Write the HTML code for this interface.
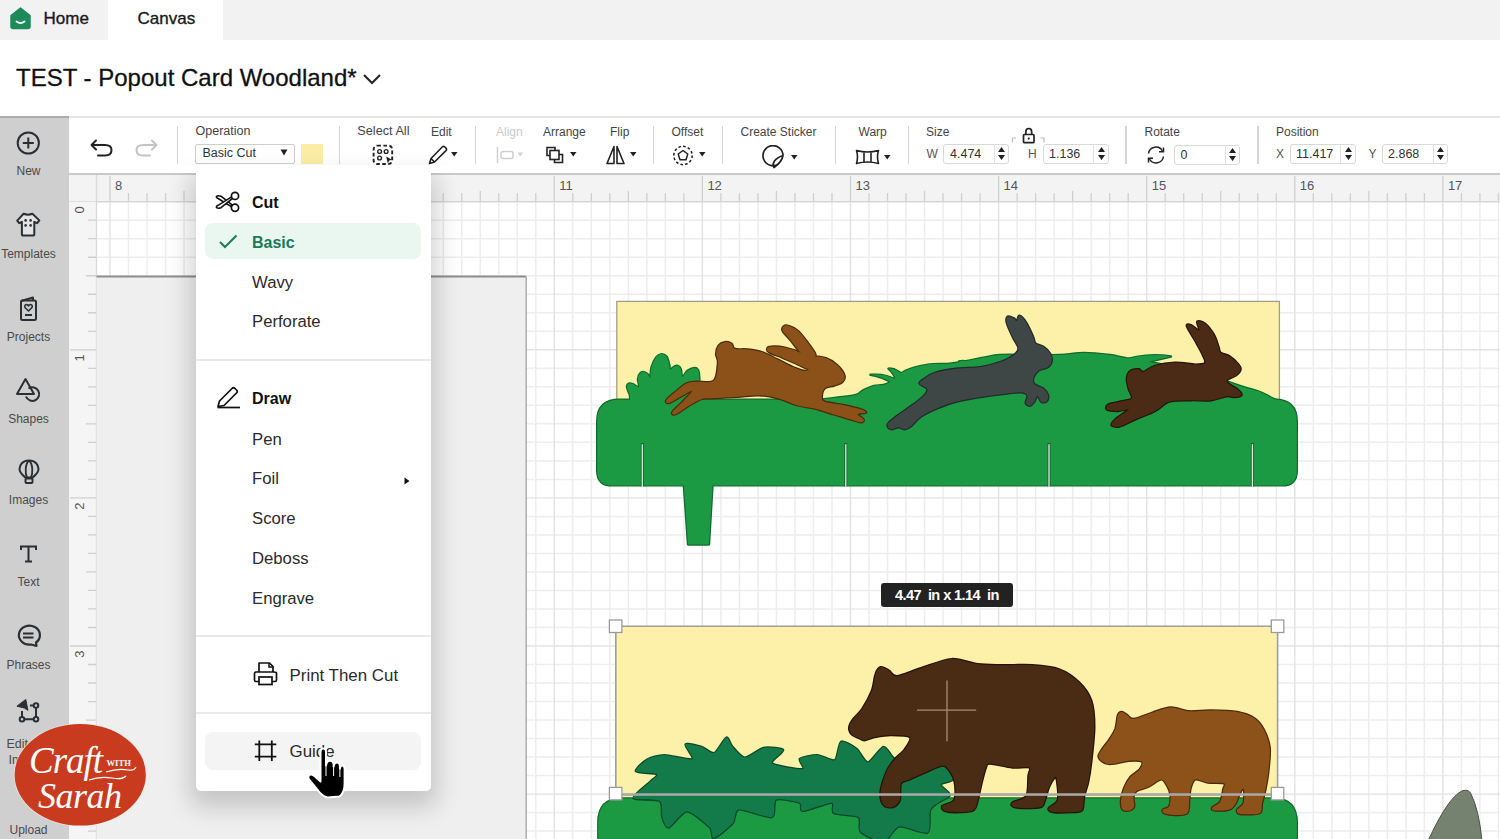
<!DOCTYPE html>
<html><head><meta charset="utf-8">
<style>
*{box-sizing:border-box;margin:0;padding:0}
html,body{width:1500px;height:839px;overflow:hidden;background:#fff;font-family:"Liberation Sans",sans-serif;color:#222}
.abs{position:absolute}
#topbar{position:absolute;left:0;top:0;width:1500px;height:40px;background:#f2f2f2}
#tab-canvas{position:absolute;left:108px;top:0;width:115px;height:40px;background:#fff}
.tabtxt{position:absolute;font-size:16px;color:#1a1a1a;white-space:nowrap;-webkit-text-stroke:0.35px #1a1a1a}
#title{position:absolute;left:16px;top:64px;font-size:23.5px;color:#111;white-space:nowrap;-webkit-text-stroke:0.3px #111}
#sidebar{position:absolute;left:0;top:116px;width:69px;height:723px;background:#cfcfcf;border-top:2px solid #ababab}
.sblabel{position:absolute;width:69px;left:0;text-align:center;font-size:12px;color:#4a4a4a;white-space:nowrap}
.sbicon{position:absolute;left:0;width:56px}
#toolbar{position:absolute;left:69px;top:116px;width:1431px;height:59px;background:#fff;border-top:2px solid #e6e6e6;border-bottom:2px solid #c9c9c9}
.tl{position:absolute;font-size:12px;color:#444;white-space:nowrap;top:7px}
.sep{position:absolute;top:8px;width:1.5px;height:38px;background:#d6d6d6}
.inp{position:absolute;top:26px;height:20px;border:1px solid #d9d9d9;border-radius:3px;background:#fff;font-size:13px;color:#333}
.menu-item{position:absolute;left:252px;font-size:16px;color:#2b2b2b;white-space:nowrap}
</style></head><body>
<div id="topbar"></div>
<div id="tab-canvas"></div>
<svg class="abs" style="left:9px;top:7px" width="23" height="23" viewBox="0 0 23 23">
<path d="M11.5 1 L21 8.5 L21 19.5 Q21 21.5 19 21.5 L4 21.5 Q2 21.5 2 19.5 L2 8.5 Z" fill="#1c8a5b" stroke="#1c8a5b" stroke-width="1.5" stroke-linejoin="round"/>
<path d="M7.5 14.5 Q11.5 17.5 15.5 14.5" fill="none" stroke="#fff" stroke-width="1.8" stroke-linecap="round"/>
</svg>
<div class="tabtxt" style="left:43.5px;top:10px;line-height:1;font-size:17px">Home</div>
<div class="tabtxt" style="left:137.5px;top:10px;line-height:1;font-size:17px">Canvas</div>
<div id="title" style="line-height:1;top:66.4px;font-size:24px">TEST - Popout Card Woodland*</div>
<svg class="abs" style="left:362px;top:72px" width="20" height="14" viewBox="0 0 20 14"><path d="M2 3 L10 11 L18 3" fill="none" stroke="#222" stroke-width="2"/></svg>

<div id="sidebar"></div>
<!-- New -->
<svg class="abs" style="left:16px;top:131px" width="25" height="25" viewBox="0 0 25 25"><circle cx="12.3" cy="12" r="10.6" fill="none" stroke="#2a2f33" stroke-width="2"/><path d="M12.3 6.5V17.5M6.8 12H17.8" stroke="#2a2f33" stroke-width="2"/></svg>
<div class="sblabel" style="top:165px;line-height:1;left:-6px">New</div>
<!-- Templates -->
<svg class="abs" style="left:16px;top:212px" width="25" height="26" viewBox="0 0 25 26"><path d="M7.6 1.8 Q12 3.6 16.4 1.8 L23.3 8.4 L21.2 11.2 L18.3 9.8 L18.3 22 Q18.3 23.6 16.7 23.6 L7.5 23.6 Q5.9 23.6 5.9 22 L5.9 9.8 L3.2 11.2 L1.2 8.6 Z" fill="#e4e4e4" stroke="#2a2f33" stroke-width="2" stroke-linejoin="round"/><circle cx="9.6" cy="8.4" r="1.3" fill="#2a2f33"/><circle cx="14.6" cy="8.4" r="1.3" fill="#2a2f33"/><circle cx="9.6" cy="13.4" r="1.3" fill="#2a2f33"/><circle cx="14.6" cy="13.4" r="1.3" fill="#2a2f33"/></svg>
<div class="sblabel" style="top:247.5px;line-height:1;left:-6px">Templates</div>
<!-- Projects -->
<svg class="abs" style="left:18px;top:296px" width="22" height="26" viewBox="0 0 22 26"><path d="M3 5 L15 1.5 L15 4" fill="none" stroke="#2a2f33" stroke-width="2" stroke-linejoin="round"/><rect x="3" y="4.5" width="15" height="19.5" rx="1.5" fill="none" stroke="#2a2f33" stroke-width="2"/><path d="M10.5 15 L7 11.5 Q6 9 8.5 8.5 Q10 8.5 10.5 10 Q11 8.5 12.5 8.5 Q15 9 14 11.5 Z" fill="none" stroke="#2a2f33" stroke-width="1.6" stroke-linejoin="round"/><path d="M7 19H14" stroke="#2a2f33" stroke-width="2"/></svg>
<div class="sblabel" style="top:330.5px;line-height:1;left:-6px">Projects</div>
<!-- Shapes -->
<svg class="abs" style="left:15px;top:377px" width="27" height="26" viewBox="0 0 27 26"><path d="M10.5 2 L2 17 L19 17 Z" fill="none" stroke="#2a2f33" stroke-width="2" stroke-linejoin="round"/><path d="M13.5 11.5 A6.8 6.8 0 1 1 11 19.5" fill="none" stroke="#2a2f33" stroke-width="2"/></svg>
<div class="sblabel" style="top:412.5px;line-height:1;left:-6px">Shapes</div>
<!-- Images -->
<svg class="abs" style="left:18px;top:459px" width="22" height="26" viewBox="0 0 22 26"><path d="M11 1.5 C4.5 1.5 1.5 6 1.5 10 C1.5 14 5 16.5 7.5 18.5 L14.5 18.5 C17 16.5 20.5 14 20.5 10 C20.5 6 17.5 1.5 11 1.5 Z" fill="none" stroke="#2a2f33" stroke-width="2"/><path d="M11 1.5 C7 5 7 14 9 18.5 M11 1.5 C15 5 15 14 13 18.5" fill="none" stroke="#2a2f33" stroke-width="1.8"/><rect x="7.5" y="19.5" width="7" height="4.5" rx="1" fill="none" stroke="#2a2f33" stroke-width="2"/></svg>
<div class="sblabel" style="top:494px;line-height:1;left:-6px">Images</div>
<!-- Text -->
<svg class="abs" style="left:19px;top:544px" width="19" height="20" viewBox="0 0 19 20"><path d="M2 6 L2 2.5 L17 2.5 L17 6 M9.5 2.5 L9.5 17.5 M6 17.5 L13 17.5" fill="none" stroke="#2a2f33" stroke-width="2"/></svg>
<div class="sblabel" style="top:576px;line-height:1;left:-6px">Text</div>
<!-- Phrases -->
<svg class="abs" style="left:15px;top:623px" width="27" height="26" viewBox="0 0 27 26"><path d="M21 19.5 A10.5 9.5 0 1 0 16 21.5 L21.5 23 Z" fill="none" stroke="#2a2f33" stroke-width="2.2" stroke-linejoin="round"/><path d="M8 10.5H18.5M8 14.5H18.5" stroke="#2a2f33" stroke-width="2"/></svg>
<div class="sblabel" style="top:659px;line-height:1;left:-6px">Phrases</div>
<!-- Edit Image -->
<svg class="abs" style="left:15px;top:698px" width="27" height="26" viewBox="0 0 27 26"><path d="M7 13 V21.3 H21 V7.5 H15" fill="none" stroke="#2a2f33" stroke-width="2"/><circle cx="7" cy="21.3" r="2.3" fill="#cfcfcf" stroke="#2a2f33" stroke-width="2"/><circle cx="21" cy="21.3" r="2.3" fill="#cfcfcf" stroke="#2a2f33" stroke-width="2"/><circle cx="21" cy="7.5" r="2.3" fill="#cfcfcf" stroke="#2a2f33" stroke-width="2"/><path d="M1.9 8.2 L10.8 1.4 L12.9 12.3 L9.3 10 Z" fill="#2a2f33" stroke="#2a2f33" stroke-width="1" stroke-linejoin="round"/></svg>
<div class="abs" style="top:737.5px;line-height:1;left:6.5px;font-size:12.5px;color:#4a4a4a">Edit</div>
<div class="abs" style="top:754px;line-height:1;left:8.5px;font-size:12.5px;color:#4a4a4a">Image</div>
<div class="sblabel" style="top:824px;line-height:1;left:-6px">Upload</div>
<div id="toolbar"></div>
<!-- undo/redo -->
<svg class="abs" style="left:88px;top:137px" width="28" height="22" viewBox="0 0 28 22"><path d="M8 3.5 L3.5 8 L8 12.5 M3.5 8 L17 8 Q23.5 8 23.5 13 Q23.5 18.5 17 18.5 L10 18.5" fill="none" stroke="#222" stroke-width="2" stroke-linejoin="round" stroke-linecap="round"/></svg>
<svg class="abs" style="left:132px;top:137px" width="28" height="22" viewBox="0 0 28 22" style="transform:scaleX(-1)"><g transform="translate(28,0) scale(-1,1)"><path d="M8 3.5 L3.5 8 L8 12.5 M3.5 8 L17 8 Q23.5 8 23.5 13 Q23.5 18.5 17 18.5 L10 18.5" fill="none" stroke="#c4c4c4" stroke-width="2" stroke-linejoin="round" stroke-linecap="round"/></g></svg>
<div class="sep" style="left:176.5px;top:126px"></div>
<div class="tl" style="left:195.5px;top:125.4px;line-height:1;font-size:12.5px">Operation</div>
<div class="abs" style="left:195px;top:143.5px;width:99.5px;height:20.5px;border:1px solid #cfcfcf;border-radius:2px;background:#fff"></div>
<div class="abs" style="left:202.5px;top:147px;font-size:12.5px;line-height:1;color:#333;white-space:nowrap">Basic Cut</div>
<svg class="abs" style="left:280px;top:149px" width="8" height="7" viewBox="0 0 8 7"><path d="M0.5 0.5 L7.5 0.5 L4 6.5 Z" fill="#222"/></svg>
<div class="abs" style="left:300.5px;top:143.5px;width:22px;height:20px;background:#fbeda6;border-radius:1px"></div>
<div class="sep" style="left:338.5px;top:126px"></div>
<div class="tl" style="left:357.3px;top:125.2px;line-height:1;font-size:12.7px">Select All</div>
<svg class="abs" style="left:372px;top:144px" width="22" height="22" viewBox="0 0 22 22"><rect x="1.6" y="1.6" width="18.6" height="18.4" rx="3.8" fill="none" stroke="#222" stroke-width="1.9" stroke-dasharray="3.6 2.4"/><circle cx="7.6" cy="7.5" r="1.9" fill="none" stroke="#222" stroke-width="1.4"/><circle cx="14.1" cy="7.5" r="1.9" fill="none" stroke="#222" stroke-width="1.4"/><circle cx="7.6" cy="14" r="1.9" fill="none" stroke="#222" stroke-width="1.4"/><path d="M14.2 12.6 L20 15.8 L17.2 16.6 L15.8 19.6 Z" fill="#222"/></svg>
<div class="tl" style="left:431px;top:125.5px;line-height:1">Edit</div>
<svg class="abs" style="left:427px;top:144px" width="22" height="22" viewBox="0 0 22 22"><path d="M2.5 19.5 L4 14.5 L15.5 2.8 Q16.5 1.8 17.6 2.8 L19.2 4.4 Q20.2 5.4 19.2 6.4 L7.5 18 Z M4 14.5 L7.5 18" fill="none" stroke="#222" stroke-width="1.6" stroke-linejoin="round"/></svg>
<svg class="abs" style="left:451px;top:152px" width="7" height="5" viewBox="0 0 7 5"><path d="M0 0 L6.5 0 L3.25 4.5 Z" fill="#222"/></svg>
<div class="sep" style="left:474.5px;top:126px"></div>
<div class="tl" style="left:496px;top:125.5px;line-height:1;color:#c9c9c9">Align</div>
<svg class="abs" style="left:495px;top:146px" width="30" height="18" viewBox="0 0 30 18"><path d="M2.5 1 V17" stroke="#cfcfcf" stroke-width="1.5"/><rect x="6" y="5.5" width="12" height="7" rx="2" fill="none" stroke="#cfcfcf" stroke-width="1.5"/><path d="M22.5 6.5 L28 6.5 L25.25 10.5 Z" fill="#d0d0d0"/></svg>
<div class="tl" style="left:543px;top:125.5px;line-height:1">Arrange</div>
<svg class="abs" style="left:544px;top:145px" width="22" height="20" viewBox="0 0 22 20"><path d="M11 5 L11 2.5 L3 2.5 L3 10.5 L6 10.5" fill="none" stroke="#222" stroke-width="1.6"/><rect x="6" y="5.5" width="9" height="9" fill="none" stroke="#222" stroke-width="1.6"/><path d="M15 9.5 L18.5 9.5 L18.5 17.5 L10.5 17.5 L10.5 14.5" fill="none" stroke="#222" stroke-width="1.6"/></svg>
<svg class="abs" style="left:569.5px;top:152px" width="7" height="5" viewBox="0 0 7 5"><path d="M0 0 L6.5 0 L3.25 4.5 Z" fill="#222"/></svg>
<div class="tl" style="left:610px;top:125.5px;line-height:1">Flip</div>
<svg class="abs" style="left:605px;top:145px" width="21" height="20" viewBox="0 0 21 20"><path d="M9 1.5 L2 18.5 L9 18.5 Z M12 1.5 L19 18.5 L12 18.5 Z" fill="none" stroke="#222" stroke-width="1.6" stroke-linejoin="round"/></svg>
<svg class="abs" style="left:629.5px;top:152px" width="7" height="5" viewBox="0 0 7 5"><path d="M0 0 L6.5 0 L3.25 4.5 Z" fill="#222"/></svg>
<div class="sep" style="left:652.5px;top:126px"></div>
<div class="tl" style="left:671.5px;top:125.5px;line-height:1">Offset</div>
<svg class="abs" style="left:672px;top:145px" width="22" height="21" viewBox="0 0 22 21"><circle cx="11" cy="10.5" r="9.2" fill="none" stroke="#222" stroke-width="1.6" stroke-dasharray="2.6 2.2"/><path d="M11 5.5 L15.8 9 L14 14.8 L8 14.8 L6.2 9 Z" fill="none" stroke="#222" stroke-width="1.5" stroke-linejoin="round"/></svg>
<svg class="abs" style="left:699px;top:152px" width="7" height="5" viewBox="0 0 7 5"><path d="M0 0 L6.5 0 L3.25 4.5 Z" fill="#222"/></svg>
<div class="sep" style="left:721.5px;top:126px"></div>
<div class="tl" style="left:740.5px;top:125.5px;line-height:1">Create Sticker</div>
<svg class="abs" style="left:761px;top:145px" width="26" height="25" viewBox="0 0 26 25"><path d="M17.5 19 A10 10 0 1 1 22 10.5 Q21 17 13 22.5 Q11 20 13.5 16 Q16 12.5 22 10.5" fill="none" stroke="#222" stroke-width="1.7" stroke-linejoin="round"/></svg>
<svg class="abs" style="left:790.5px;top:155px" width="7" height="5" viewBox="0 0 7 5"><path d="M0 0 L6.5 0 L3.25 4.5 Z" fill="#222"/></svg>
<div class="sep" style="left:834.5px;top:126px"></div>
<div class="tl" style="left:858.5px;top:125.5px;line-height:1">Warp</div>
<svg class="abs" style="left:855px;top:149px" width="26" height="17" viewBox="0 0 26 17"><path d="M1.5 1.5 Q12.5 4.5 23.5 1.5 Q21.5 8 23.5 14.5 Q12.5 11.5 1.5 14.5 Q3.5 8 1.5 1.5 Z M9 3 V13 M16 3 V13" fill="none" stroke="#222" stroke-width="1.6" stroke-linejoin="round"/></svg>
<svg class="abs" style="left:884px;top:155px" width="7" height="5" viewBox="0 0 7 5"><path d="M0 0 L6.5 0 L3.25 4.5 Z" fill="#222"/></svg>
<div class="sep" style="left:907.5px;top:126px"></div>
<div class="tl" style="left:926px;top:125.5px;line-height:1">Size</div>
<div class="tl" style="left:926.5px;top:147.5px;line-height:1;color:#555">W</div>
<div class="inp" style="left:943px;top:143.5px;width:65.5px;height:20.5px"></div>
<div class="abs" style="left:993.5px;top:144px;width:1px;height:19.5px;background:#e0e0e0"></div>
<div class="abs" style="left:950px;top:148px;font-size:12.5px;line-height:1;color:#333">4.474</div>
<svg class="abs" style="left:997px;top:146px" width="9" height="15" viewBox="0 0 9 15"><path d="M4.5 1 L8 6 L1 6 Z M1 9 L8 9 L4.5 14 Z" fill="#222"/></svg>
<svg class="abs" style="left:1011px;top:127px" width="35" height="17" viewBox="0 0 35 17"><path d="M1.5 15.5 V11 H5 M29.5 11 H33 V15.5" fill="none" stroke="#bdbdbd" stroke-width="1.2"/><rect x="12.5" y="7.5" width="10.5" height="8.2" rx="1" fill="none" stroke="#222" stroke-width="1.7"/><path d="M14.8 7.5 V5 Q14.8 1.5 17.75 1.5 Q20.7 1.5 20.7 5 V7.5" fill="none" stroke="#222" stroke-width="1.7"/><circle cx="17.75" cy="11.6" r="1.1" fill="#222"/></svg>
<div class="tl" style="left:1028px;top:147.5px;line-height:1;color:#555">H</div>
<div class="inp" style="left:1042.5px;top:143.5px;width:66px;height:20.5px"></div>
<div class="abs" style="left:1093px;top:144px;width:1px;height:19.5px;background:#e0e0e0"></div>
<div class="abs" style="left:1049px;top:148px;font-size:12.5px;line-height:1;color:#333">1.136</div>
<svg class="abs" style="left:1096.5px;top:146px" width="9" height="15" viewBox="0 0 9 15"><path d="M4.5 1 L8 6 L1 6 Z M1 9 L8 9 L4.5 14 Z" fill="#222"/></svg>
<div class="sep" style="left:1125px;top:126px"></div>
<div class="tl" style="left:1144.5px;top:125.5px;line-height:1">Rotate</div>
<svg class="abs" style="left:1145px;top:145px" width="22" height="20" viewBox="0 0 22 20"><path d="M3.5 8.5 A7.5 7.5 0 0 1 17.5 6 M18.5 11.5 A7.5 7.5 0 0 1 4.5 14" fill="none" stroke="#222" stroke-width="1.5"/><path d="M18.5 2.5 V6.8 H14 M3.5 17.5 V13.2 H8" fill="none" stroke="#222" stroke-width="1.5"/></svg>
<div class="inp" style="left:1173.5px;top:144.5px;width:66.5px;height:20.5px"></div>
<div class="abs" style="left:1224.5px;top:145px;width:1px;height:19.5px;background:#e0e0e0"></div>
<div class="abs" style="left:1180.5px;top:148.5px;font-size:12.5px;line-height:1;color:#333">0</div>
<svg class="abs" style="left:1228px;top:147px" width="9" height="15" viewBox="0 0 9 15"><path d="M4.5 1 L8 6 L1 6 Z M1 9 L8 9 L4.5 14 Z" fill="#222"/></svg>
<div class="sep" style="left:1257px;top:126px"></div>
<div class="tl" style="left:1276px;top:125.5px;line-height:1">Position</div>
<div class="tl" style="left:1276px;top:147.5px;line-height:1;color:#555">X</div>
<div class="inp" style="left:1289.5px;top:143.5px;width:66px;height:20.5px"></div>
<div class="abs" style="left:1340px;top:144px;width:1px;height:19.5px;background:#e0e0e0"></div>
<div class="abs" style="left:1296px;top:148px;font-size:12.5px;line-height:1;color:#333">11.417</div>
<svg class="abs" style="left:1343.5px;top:146px" width="9" height="15" viewBox="0 0 9 15"><path d="M4.5 1 L8 6 L1 6 Z M1 9 L8 9 L4.5 14 Z" fill="#222"/></svg>
<div class="tl" style="left:1368.5px;top:147.5px;line-height:1;color:#555">Y</div>
<div class="inp" style="left:1382px;top:143.5px;width:65.5px;height:20.5px"></div>
<div class="abs" style="left:1432.5px;top:144px;width:1px;height:19.5px;background:#e0e0e0"></div>
<div class="abs" style="left:1388px;top:148px;font-size:12.5px;line-height:1;color:#333">2.868</div>
<svg class="abs" style="left:1436px;top:146px" width="9" height="15" viewBox="0 0 9 15"><path d="M4.5 1 L8 6 L1 6 Z M1 9 L8 9 L4.5 14 Z" fill="#222"/></svg>
<svg class="abs" style="left:0;top:0" width="1500" height="839" viewBox="0 0 1500 839">
<rect x="96.5" y="201.7" width="1403.5" height="637.3" fill="#ffffff"/>
<path d="M128.51 201.7V839M147.03 201.7V839M165.54 201.7V839M184.05 201.7V839M202.56 201.7V839M221.07 201.7V839M239.59 201.7V839M276.61 201.7V839M295.12 201.7V839M313.64 201.7V839M332.15 201.7V839M350.66 201.7V839M369.18 201.7V839M387.69 201.7V839M424.71 201.7V839M443.22 201.7V839M461.74 201.7V839M480.25 201.7V839M498.76 201.7V839M517.27 201.7V839M535.79 201.7V839M572.81 201.7V839M591.33 201.7V839M609.84 201.7V839M628.35 201.7V839M646.86 201.7V839M665.38 201.7V839M683.89 201.7V839M720.91 201.7V839M739.42 201.7V839M757.94 201.7V839M776.45 201.7V839M794.96 201.7V839M813.48 201.7V839M831.99 201.7V839M869.01 201.7V839M887.52 201.7V839M906.04 201.7V839M924.55 201.7V839M943.06 201.7V839M961.57 201.7V839M980.09 201.7V839M1017.11 201.7V839M1035.62 201.7V839M1054.14 201.7V839M1072.65 201.7V839M1091.16 201.7V839M1109.67 201.7V839M1128.19 201.7V839M1165.21 201.7V839M1183.72 201.7V839M1202.24 201.7V839M1220.75 201.7V839M1239.26 201.7V839M1257.77 201.7V839M1276.29 201.7V839M1313.31 201.7V839M1331.83 201.7V839M1350.34 201.7V839M1368.85 201.7V839M1387.36 201.7V839M1405.88 201.7V839M1424.39 201.7V839M1461.41 201.7V839M1479.92 201.7V839M1498.44 201.7V839M96.5 220.21H1500M96.5 238.72H1500M96.5 257.24H1500M96.5 275.75H1500M96.5 294.26H1500M96.5 312.77H1500M96.5 331.29H1500M96.5 368.31H1500M96.5 386.82H1500M96.5 405.34H1500M96.5 423.85H1500M96.5 442.36H1500M96.5 460.88H1500M96.5 479.39H1500M96.5 516.41H1500M96.5 534.92H1500M96.5 553.44H1500M96.5 571.95H1500M96.5 590.46H1500M96.5 608.97H1500M96.5 627.49H1500M96.5 664.51H1500M96.5 683.02H1500M96.5 701.54H1500M96.5 720.05H1500M96.5 738.56H1500M96.5 757.08H1500M96.5 775.59H1500M96.5 812.61H1500M96.5 831.12H1500" stroke="#ededed" stroke-width="1.5" fill="none"/>
<path d="M110.00 201.7V839M258.10 201.7V839M406.20 201.7V839M554.30 201.7V839M702.40 201.7V839M850.50 201.7V839M998.60 201.7V839M1146.70 201.7V839M1294.80 201.7V839M1442.90 201.7V839M96.5 349.80H1500M96.5 497.90H1500M96.5 646.00H1500M96.5 794.10H1500" stroke="#e2e2e2" stroke-width="1.4" fill="none"/>
<rect x="69" y="175" width="1431" height="26.7" fill="#f3f3f3"/>
<path d="M110.00 176V201.7M128.51 193V201.7M147.03 193V201.7M165.54 193V201.7M184.05 191V201.7M202.56 193V201.7M221.07 193V201.7M239.59 193V201.7M258.10 176V201.7M276.61 193V201.7M295.12 193V201.7M313.64 193V201.7M332.15 191V201.7M350.66 193V201.7M369.18 193V201.7M387.69 193V201.7M406.20 176V201.7M424.71 193V201.7M443.22 193V201.7M461.74 193V201.7M480.25 191V201.7M498.76 193V201.7M517.27 193V201.7M535.79 193V201.7M554.30 176V201.7M572.81 193V201.7M591.33 193V201.7M609.84 193V201.7M628.35 191V201.7M646.86 193V201.7M665.38 193V201.7M683.89 193V201.7M702.40 176V201.7M720.91 193V201.7M739.42 193V201.7M757.94 193V201.7M776.45 191V201.7M794.96 193V201.7M813.48 193V201.7M831.99 193V201.7M850.50 176V201.7M869.01 193V201.7M887.52 193V201.7M906.04 193V201.7M924.55 191V201.7M943.06 193V201.7M961.57 193V201.7M980.09 193V201.7M998.60 176V201.7M1017.11 193V201.7M1035.62 193V201.7M1054.14 193V201.7M1072.65 191V201.7M1091.16 193V201.7M1109.67 193V201.7M1128.19 193V201.7M1146.70 176V201.7M1165.21 193V201.7M1183.72 193V201.7M1202.24 193V201.7M1220.75 191V201.7M1239.26 193V201.7M1257.77 193V201.7M1276.29 193V201.7M1294.80 176V201.7M1313.31 193V201.7M1331.83 193V201.7M1350.34 193V201.7M1368.85 191V201.7M1387.36 193V201.7M1405.88 193V201.7M1424.39 193V201.7M1442.90 176V201.7M1461.41 193V201.7M1479.92 193V201.7M1498.44 193V201.7" stroke="#cfcfcf" stroke-width="1.3" fill="none"/>
<path d="M69 201.7H1500" stroke="#d6d6d6" stroke-width="1.5"/>
<rect x="69" y="201.7" width="27.5" height="637.3" fill="#f5f5f5"/>
<path d="M88 220.21H96.5M88 238.72H96.5M88 257.24H96.5M86 275.75H96.5M88 294.26H96.5M88 312.77H96.5M88 331.29H96.5M70 349.80H96.5M88 368.31H96.5M88 386.82H96.5M88 405.34H96.5M86 423.85H96.5M88 442.36H96.5M88 460.88H96.5M88 479.39H96.5M70 497.90H96.5M88 516.41H96.5M88 534.92H96.5M88 553.44H96.5M86 571.95H96.5M88 590.46H96.5M88 608.97H96.5M88 627.49H96.5M70 646.00H96.5M88 664.51H96.5M88 683.02H96.5M88 701.54H96.5M86 720.05H96.5M88 738.56H96.5M88 757.08H96.5M88 775.59H96.5M70 794.10H96.5M88 812.61H96.5M88 831.12H96.5" stroke="#cfcfcf" stroke-width="1.3" fill="none"/>
<path d="M96.5 175V839" stroke="#d9d9d9" stroke-width="1.3"/>
<text x="115.0" y="190" style="font-family:Liberation Sans" font-size="13" fill="#555">8</text>
<text x="263.1" y="190" style="font-family:Liberation Sans" font-size="13" fill="#555">9</text>
<text x="411.2" y="190" style="font-family:Liberation Sans" font-size="13" fill="#555">10</text>
<text x="559.3" y="190" style="font-family:Liberation Sans" font-size="13" fill="#555">11</text>
<text x="707.4" y="190" style="font-family:Liberation Sans" font-size="13" fill="#555">12</text>
<text x="855.5" y="190" style="font-family:Liberation Sans" font-size="13" fill="#555">13</text>
<text x="1003.6" y="190" style="font-family:Liberation Sans" font-size="13" fill="#555">14</text>
<text x="1151.7" y="190" style="font-family:Liberation Sans" font-size="13" fill="#555">15</text>
<text x="1299.8" y="190" style="font-family:Liberation Sans" font-size="13" fill="#555">16</text>
<text x="1447.9" y="190" style="font-family:Liberation Sans" font-size="13" fill="#555">17</text>
<text transform="translate(84 213.5) rotate(-90)" style="font-family:Liberation Sans" font-size="13" fill="#555">0</text>
<text transform="translate(84 361.6) rotate(-90)" style="font-family:Liberation Sans" font-size="13" fill="#555">1</text>
<text transform="translate(84 509.7) rotate(-90)" style="font-family:Liberation Sans" font-size="13" fill="#555">2</text>
<text transform="translate(84 657.8) rotate(-90)" style="font-family:Liberation Sans" font-size="13" fill="#555">3</text>
<text transform="translate(84 805.9) rotate(-90)" style="font-family:Liberation Sans" font-size="13" fill="#555">4</text>
<rect x="96.5" y="276" width="430" height="563" fill="#efefef"/>
<path d="M96.5 276.5H526.2" fill="none" stroke="#8d8d8d" stroke-width="1.8"/><path d="M526.2 276.5V839" fill="none" stroke="#a3a3a3" stroke-width="1.3"/>
</svg>
<svg class="abs" style="left:0;top:0" width="1500" height="839" viewBox="0 0 1500 839">
<rect x="616.8" y="301.4" width="662.6" height="130" fill="#fdf1aa" stroke="#a29d85" stroke-width="1.3"/>
<g fill="#1c9943" stroke="#0f6a2d" stroke-width="2.4" stroke-linejoin="round">
<path d="M597.2 421.8 L597.2 421.8 Q597.2 399.8 619.2 399.8 L1274.8 399.8 Q1296.8 399.8 1296.8 421.8 L1296.8 470.4 Q1296.8 485.4 1281.8 485.4 L612.2 485.4 Q597.2 485.4 597.2 470.4 Z"/>
<path d="M661.5 403.9C651.7 403.6 638.9 403.9 633.6 402.3C628.3 400.8 630.8 397.2 629.7 394.6C628.6 392.0 627.2 388.6 627.0 386.8C626.8 385.0 627.6 384.2 628.6 383.7C629.5 383.3 631.1 383.5 632.8 384.1C634.6 384.7 638.2 388.1 639.0 387.2C639.9 386.4 637.7 381.4 637.9 379.1C638.0 376.8 639.1 374.4 640.2 373.3C641.2 372.1 642.8 371.9 644.0 372.1C645.3 372.3 646.9 373.5 647.9 374.4C649.0 375.3 649.7 378.7 650.2 377.5C650.8 376.4 650.4 370.8 651.4 367.5C652.4 364.1 654.4 359.6 656.1 357.4C657.7 355.2 659.7 354.3 661.5 354.1C663.2 354.0 665.2 354.9 666.5 356.6C667.8 358.3 668.6 362.2 669.2 364.4C669.8 366.6 669.4 369.4 670.2 369.8C670.9 370.2 672.6 367.4 673.9 366.7C675.2 366.0 676.7 365.4 677.9 365.8C679.1 366.1 680.1 367.2 680.8 369.0C681.6 370.8 681.2 376.5 682.4 376.8C683.6 377.0 685.7 372.0 687.8 370.6C689.9 369.1 693.0 367.9 694.8 367.9C696.5 367.9 697.5 368.9 698.3 370.6C699.0 372.2 699.2 375.1 699.3 377.5C699.3 380.0 699.8 380.9 698.7 385.3C697.5 389.7 698.7 400.8 692.5 403.9C686.3 407.0 671.3 404.1 661.5 403.9Z"/>
<path d="M822.0 399.5C824.7 399.2 832.3 398.2 838.0 397.5C843.7 396.8 851.8 396.2 856.0 395.0C860.2 393.8 860.0 391.9 863.0 390.4C866.0 388.9 870.0 386.9 874.0 385.8C878.0 384.7 881.8 386.3 887.0 383.8C892.2 381.3 898.2 374.2 905.0 371.0C911.8 367.8 920.2 365.9 928.0 364.6C935.8 363.3 943.0 364.5 952.0 363.4C961.0 362.3 974.0 359.4 982.0 358.0C990.0 356.6 992.0 355.5 1000.0 355.0C1008.0 354.5 1020.0 355.0 1030.0 355.0C1040.0 355.0 1051.0 355.3 1060.0 355.0C1069.0 354.7 1075.7 353.0 1084.0 353.0C1092.3 353.0 1103.2 354.2 1110.0 355.0C1116.8 355.8 1116.7 356.5 1125.0 358.0C1133.3 359.5 1147.5 361.7 1160.0 364.0C1172.5 366.3 1186.7 368.3 1200.0 372.0C1213.3 375.7 1230.0 382.7 1240.0 386.0C1250.0 389.3 1254.7 390.0 1260.0 392.0C1265.3 394.0 1268.0 396.2 1272.0 398.0C1276.0 399.8 1282.0 402.2 1284.0 403.0L1284 420 L822 420 Z"/>
<path d="M898 386 Q882 376 870.4 374.8 Q886 373.5 896 380 Z"/>
<path d="M910 382 Q897 367.5 888.4 368.6 Q894 373 898 384 Z"/>
<path d="M982 368 Q968 359 959 361.3 Q966 365 973 370 Z"/>
<path d="M1118 362 Q1145 352 1171 356.5 Q1150 361 1130 367 Z"/>
<path d="M683.5 480 L712.8 480 L709 544.5 L688 544.5 Z"/>
</g><g fill="#1c9943">
<path d="M597.2 421.8 L597.2 421.8 Q597.2 399.8 619.2 399.8 L1274.8 399.8 Q1296.8 399.8 1296.8 421.8 L1296.8 470.4 Q1296.8 485.4 1281.8 485.4 L612.2 485.4 Q597.2 485.4 597.2 470.4 Z"/>
<path d="M661.5 403.9C651.7 403.6 638.9 403.9 633.6 402.3C628.3 400.8 630.8 397.2 629.7 394.6C628.6 392.0 627.2 388.6 627.0 386.8C626.8 385.0 627.6 384.2 628.6 383.7C629.5 383.3 631.1 383.5 632.8 384.1C634.6 384.7 638.2 388.1 639.0 387.2C639.9 386.4 637.7 381.4 637.9 379.1C638.0 376.8 639.1 374.4 640.2 373.3C641.2 372.1 642.8 371.9 644.0 372.1C645.3 372.3 646.9 373.5 647.9 374.4C649.0 375.3 649.7 378.7 650.2 377.5C650.8 376.4 650.4 370.8 651.4 367.5C652.4 364.1 654.4 359.6 656.1 357.4C657.7 355.2 659.7 354.3 661.5 354.1C663.2 354.0 665.2 354.9 666.5 356.6C667.8 358.3 668.6 362.2 669.2 364.4C669.8 366.6 669.4 369.4 670.2 369.8C670.9 370.2 672.6 367.4 673.9 366.7C675.2 366.0 676.7 365.4 677.9 365.8C679.1 366.1 680.1 367.2 680.8 369.0C681.6 370.8 681.2 376.5 682.4 376.8C683.6 377.0 685.7 372.0 687.8 370.6C689.9 369.1 693.0 367.9 694.8 367.9C696.5 367.9 697.5 368.9 698.3 370.6C699.0 372.2 699.2 375.1 699.3 377.5C699.3 380.0 699.8 380.9 698.7 385.3C697.5 389.7 698.7 400.8 692.5 403.9C686.3 407.0 671.3 404.1 661.5 403.9Z"/>
<path d="M822.0 399.5C824.7 399.2 832.3 398.2 838.0 397.5C843.7 396.8 851.8 396.2 856.0 395.0C860.2 393.8 860.0 391.9 863.0 390.4C866.0 388.9 870.0 386.9 874.0 385.8C878.0 384.7 881.8 386.3 887.0 383.8C892.2 381.3 898.2 374.2 905.0 371.0C911.8 367.8 920.2 365.9 928.0 364.6C935.8 363.3 943.0 364.5 952.0 363.4C961.0 362.3 974.0 359.4 982.0 358.0C990.0 356.6 992.0 355.5 1000.0 355.0C1008.0 354.5 1020.0 355.0 1030.0 355.0C1040.0 355.0 1051.0 355.3 1060.0 355.0C1069.0 354.7 1075.7 353.0 1084.0 353.0C1092.3 353.0 1103.2 354.2 1110.0 355.0C1116.8 355.8 1116.7 356.5 1125.0 358.0C1133.3 359.5 1147.5 361.7 1160.0 364.0C1172.5 366.3 1186.7 368.3 1200.0 372.0C1213.3 375.7 1230.0 382.7 1240.0 386.0C1250.0 389.3 1254.7 390.0 1260.0 392.0C1265.3 394.0 1268.0 396.2 1272.0 398.0C1276.0 399.8 1282.0 402.2 1284.0 403.0L1284 420 L822 420 Z"/>
<path d="M898 386 Q882 376 870.4 374.8 Q886 373.5 896 380 Z"/>
<path d="M910 382 Q897 367.5 888.4 368.6 Q894 373 898 384 Z"/>
<path d="M982 368 Q968 359 959 361.3 Q966 365 973 370 Z"/>
<path d="M1118 362 Q1145 352 1171 356.5 Q1150 361 1130 367 Z"/>
<path d="M683.5 480 L712.8 480 L709 544.5 L688 544.5 Z"/>
</g>
<path d="M642.3 443V486.5M845.8 443V486.5M1049 443V486.5M1252.4 443V486.5" stroke="#0f6a2d" stroke-width="3"/><path d="M642.3 444.2V487M845.8 444.2V487M1049 444.2V487M1252.4 444.2V487" stroke="#dfe9e0" stroke-width="1.3"/>
<g fill="#8c5119" stroke="#4a2a0c" stroke-width="2.4" stroke-linejoin="round">
<path d="M716.1 354.1C716.2 351.3 717.1 347.7 718.5 345.7C720.0 343.7 722.5 342.5 724.7 342.2C726.9 341.8 729.9 342.6 731.6 343.7C733.3 344.8 732.1 347.9 734.8 348.9C737.4 349.9 742.9 348.9 747.5 349.5C752.1 350.0 757.4 350.6 762.4 352.3C767.4 353.9 772.0 356.8 777.3 359.4C782.6 361.9 789.2 365.7 794.1 367.6C799.1 369.4 803.8 372.2 807.2 370.6C810.6 368.9 811.6 359.5 814.7 357.5C817.8 355.4 822.1 356.9 825.9 358.2C829.7 359.5 834.3 362.4 837.4 365.3C840.6 368.2 843.7 372.8 844.5 375.6C845.3 378.4 844.0 380.5 842.3 382.1C840.6 383.8 837.2 384.5 834.3 385.5C831.4 386.5 827.0 386.2 824.9 388.1C822.8 390.0 821.8 394.8 821.8 397.1C821.8 399.3 821.4 400.4 824.9 401.7C828.4 403.0 836.8 403.7 842.7 404.9C848.6 406.2 856.5 407.9 860.4 409.2C864.3 410.5 866.5 411.7 866.0 412.6C865.5 413.4 858.0 413.1 857.6 414.2C857.2 415.4 863.0 418.1 863.6 419.5C864.1 420.8 863.0 422.3 861.0 422.3C858.9 422.3 855.7 420.8 851.1 419.5C846.5 418.1 839.4 416.0 833.3 414.2C827.3 412.4 820.9 410.2 814.7 408.6C808.4 407.1 802.2 406.7 796.0 404.9C789.8 403.1 783.6 399.6 777.3 398.0C771.1 396.4 765.3 395.4 758.7 395.2C752.0 395.0 745.2 396.2 737.4 396.7C729.6 397.2 717.9 397.8 712.0 398.2C706.1 398.6 705.8 397.6 701.7 398.9C697.7 400.3 692.1 403.8 687.7 406.4C683.4 409.0 678.2 413.3 675.6 414.2C673.0 415.2 671.3 414.0 672.4 412.0C673.5 410.0 678.8 405.8 682.1 402.3C685.4 398.8 692.7 391.7 692.2 390.9C691.7 390.1 683.3 395.4 679.3 397.4C675.4 399.5 670.8 402.6 668.7 403.0C666.5 403.4 665.1 401.9 666.5 399.9C667.8 397.9 673.1 393.9 676.5 391.1C679.9 388.3 683.4 384.8 686.8 383.3C690.2 381.7 692.6 382.2 697.1 381.8C701.6 381.3 710.4 383.8 713.9 380.6C717.4 377.4 717.6 367.0 718.0 362.5C718.3 358.1 716.0 356.9 716.1 354.1Z"/>
<path d="M783.9 326.1C784.9 325.3 786.2 325.0 788.5 325.8C790.9 326.5 794.8 328.1 797.9 330.8C801.0 333.5 804.2 338.0 807.2 342.0C810.2 346.0 815.1 351.6 815.6 355.1C816.1 358.5 812.3 362.7 810.0 362.5C807.7 362.4 804.9 357.9 801.6 354.1C798.3 350.4 793.6 344.0 790.4 340.1C787.2 336.2 783.6 333.1 782.6 330.8C781.5 328.5 782.9 327.0 783.9 326.1Z"/>
<path d="M767.1 348.9C767.2 347.9 767.8 346.9 770.8 346.7C773.8 346.4 779.7 346.5 784.8 347.6C789.9 348.7 796.6 350.9 801.6 353.2C806.6 355.5 813.3 359.0 814.7 361.6C816.1 364.2 812.8 368.6 810.0 369.1C807.2 369.5 802.4 366.3 797.9 364.4C793.4 362.5 787.6 359.8 782.9 357.9C778.3 355.9 772.5 354.1 769.9 352.6C767.2 351.1 766.9 349.9 767.1 348.9Z"/>
</g><g fill="#8c5119">
<path d="M716.1 354.1C716.2 351.3 717.1 347.7 718.5 345.7C720.0 343.7 722.5 342.5 724.7 342.2C726.9 341.8 729.9 342.6 731.6 343.7C733.3 344.8 732.1 347.9 734.8 348.9C737.4 349.9 742.9 348.9 747.5 349.5C752.1 350.0 757.4 350.6 762.4 352.3C767.4 353.9 772.0 356.8 777.3 359.4C782.6 361.9 789.2 365.7 794.1 367.6C799.1 369.4 803.8 372.2 807.2 370.6C810.6 368.9 811.6 359.5 814.7 357.5C817.8 355.4 822.1 356.9 825.9 358.2C829.7 359.5 834.3 362.4 837.4 365.3C840.6 368.2 843.7 372.8 844.5 375.6C845.3 378.4 844.0 380.5 842.3 382.1C840.6 383.8 837.2 384.5 834.3 385.5C831.4 386.5 827.0 386.2 824.9 388.1C822.8 390.0 821.8 394.8 821.8 397.1C821.8 399.3 821.4 400.4 824.9 401.7C828.4 403.0 836.8 403.7 842.7 404.9C848.6 406.2 856.5 407.9 860.4 409.2C864.3 410.5 866.5 411.7 866.0 412.6C865.5 413.4 858.0 413.1 857.6 414.2C857.2 415.4 863.0 418.1 863.6 419.5C864.1 420.8 863.0 422.3 861.0 422.3C858.9 422.3 855.7 420.8 851.1 419.5C846.5 418.1 839.4 416.0 833.3 414.2C827.3 412.4 820.9 410.2 814.7 408.6C808.4 407.1 802.2 406.7 796.0 404.9C789.8 403.1 783.6 399.6 777.3 398.0C771.1 396.4 765.3 395.4 758.7 395.2C752.0 395.0 745.2 396.2 737.4 396.7C729.6 397.2 717.9 397.8 712.0 398.2C706.1 398.6 705.8 397.6 701.7 398.9C697.7 400.3 692.1 403.8 687.7 406.4C683.4 409.0 678.2 413.3 675.6 414.2C673.0 415.2 671.3 414.0 672.4 412.0C673.5 410.0 678.8 405.8 682.1 402.3C685.4 398.8 692.7 391.7 692.2 390.9C691.7 390.1 683.3 395.4 679.3 397.4C675.4 399.5 670.8 402.6 668.7 403.0C666.5 403.4 665.1 401.9 666.5 399.9C667.8 397.9 673.1 393.9 676.5 391.1C679.9 388.3 683.4 384.8 686.8 383.3C690.2 381.7 692.6 382.2 697.1 381.8C701.6 381.3 710.4 383.8 713.9 380.6C717.4 377.4 717.6 367.0 718.0 362.5C718.3 358.1 716.0 356.9 716.1 354.1Z"/>
<path d="M783.9 326.1C784.9 325.3 786.2 325.0 788.5 325.8C790.9 326.5 794.8 328.1 797.9 330.8C801.0 333.5 804.2 338.0 807.2 342.0C810.2 346.0 815.1 351.6 815.6 355.1C816.1 358.5 812.3 362.7 810.0 362.5C807.7 362.4 804.9 357.9 801.6 354.1C798.3 350.4 793.6 344.0 790.4 340.1C787.2 336.2 783.6 333.1 782.6 330.8C781.5 328.5 782.9 327.0 783.9 326.1Z"/>
<path d="M767.1 348.9C767.2 347.9 767.8 346.9 770.8 346.7C773.8 346.4 779.7 346.5 784.8 347.6C789.9 348.7 796.6 350.9 801.6 353.2C806.6 355.5 813.3 359.0 814.7 361.6C816.1 364.2 812.8 368.6 810.0 369.1C807.2 369.5 802.4 366.3 797.9 364.4C793.4 362.5 787.6 359.8 782.9 357.9C778.3 355.9 772.5 354.1 769.9 352.6C767.2 351.1 766.9 349.9 767.1 348.9Z"/>
</g>
<g fill="#3f4646" stroke="#222a2a" stroke-width="2.4" stroke-linejoin="round">
<path d="M919.5 383.5C919.1 381.8 921.7 380.5 924.4 378.7C927.0 376.9 930.3 374.2 935.6 372.6C941.0 370.9 949.0 369.6 956.6 368.7C964.1 367.8 973.2 368.3 980.7 367.1C988.2 365.9 996.1 363.6 1001.6 361.6C1007.1 359.7 1010.9 357.4 1013.7 355.2C1016.5 353.0 1018.6 351.5 1018.5 348.4C1018.4 345.4 1014.8 341.5 1012.9 337.2C1010.9 332.9 1007.6 326.1 1006.8 322.7C1005.9 319.3 1006.6 317.3 1007.7 316.6C1008.9 315.8 1012.1 317.4 1013.7 318.2C1015.2 318.9 1016.0 321.5 1016.9 321.1C1017.8 320.7 1017.8 315.5 1019.3 315.6C1020.8 315.8 1023.5 318.4 1025.7 321.9C1028.0 325.4 1031.4 332.8 1033.0 336.4C1034.6 339.9 1033.7 341.6 1035.4 343.3C1037.1 345.0 1041.0 345.2 1043.4 346.8C1045.9 348.5 1048.5 351.0 1049.9 353.3C1051.3 355.6 1052.1 358.2 1051.8 360.5C1051.5 362.8 1050.1 365.3 1048.0 367.0C1045.8 368.6 1041.4 368.4 1038.9 370.2C1036.5 371.9 1034.3 375.1 1033.5 377.4C1032.7 379.7 1032.5 382.0 1034.1 383.9C1035.8 385.7 1041.1 386.8 1043.4 388.7C1045.8 390.6 1047.4 393.0 1048.0 395.1C1048.5 397.2 1047.7 400.1 1046.7 401.2C1045.6 402.4 1043.1 402.8 1041.5 401.9C1040.0 401.0 1038.6 395.9 1037.3 395.9C1036.1 395.9 1035.3 400.3 1034.1 401.9C1032.9 403.5 1031.6 405.4 1030.3 405.6C1028.9 405.8 1026.2 404.9 1025.7 403.2C1025.3 401.5 1028.2 397.3 1027.4 395.4C1026.6 393.6 1024.7 392.5 1020.9 392.2C1017.2 392.0 1011.5 393.0 1004.8 393.8C998.1 394.6 988.7 395.8 980.7 397.0C972.6 398.3 963.8 399.7 956.6 401.6C949.3 403.4 943.1 405.8 937.2 408.3C931.3 410.8 925.5 413.4 921.1 416.4C916.8 419.3 913.9 423.9 911.2 426.0C908.4 428.2 906.9 429.0 904.7 429.2C902.6 429.4 900.6 427.3 898.3 427.3C896.0 427.3 892.7 429.7 890.9 429.2C889.1 428.7 886.7 426.6 887.7 424.4C888.7 422.2 893.6 418.8 897.0 416.0C900.4 413.3 904.0 411.2 908.3 408.0C912.6 404.8 919.6 400.2 922.8 397.0C925.9 393.9 927.8 391.3 927.3 389.0C926.7 386.7 920.0 385.2 919.5 383.5Z"/>
</g><g fill="#3f4646">
<path d="M919.5 383.5C919.1 381.8 921.7 380.5 924.4 378.7C927.0 376.9 930.3 374.2 935.6 372.6C941.0 370.9 949.0 369.6 956.6 368.7C964.1 367.8 973.2 368.3 980.7 367.1C988.2 365.9 996.1 363.6 1001.6 361.6C1007.1 359.7 1010.9 357.4 1013.7 355.2C1016.5 353.0 1018.6 351.5 1018.5 348.4C1018.4 345.4 1014.8 341.5 1012.9 337.2C1010.9 332.9 1007.6 326.1 1006.8 322.7C1005.9 319.3 1006.6 317.3 1007.7 316.6C1008.9 315.8 1012.1 317.4 1013.7 318.2C1015.2 318.9 1016.0 321.5 1016.9 321.1C1017.8 320.7 1017.8 315.5 1019.3 315.6C1020.8 315.8 1023.5 318.4 1025.7 321.9C1028.0 325.4 1031.4 332.8 1033.0 336.4C1034.6 339.9 1033.7 341.6 1035.4 343.3C1037.1 345.0 1041.0 345.2 1043.4 346.8C1045.9 348.5 1048.5 351.0 1049.9 353.3C1051.3 355.6 1052.1 358.2 1051.8 360.5C1051.5 362.8 1050.1 365.3 1048.0 367.0C1045.8 368.6 1041.4 368.4 1038.9 370.2C1036.5 371.9 1034.3 375.1 1033.5 377.4C1032.7 379.7 1032.5 382.0 1034.1 383.9C1035.8 385.7 1041.1 386.8 1043.4 388.7C1045.8 390.6 1047.4 393.0 1048.0 395.1C1048.5 397.2 1047.7 400.1 1046.7 401.2C1045.6 402.4 1043.1 402.8 1041.5 401.9C1040.0 401.0 1038.6 395.9 1037.3 395.9C1036.1 395.9 1035.3 400.3 1034.1 401.9C1032.9 403.5 1031.6 405.4 1030.3 405.6C1028.9 405.8 1026.2 404.9 1025.7 403.2C1025.3 401.5 1028.2 397.3 1027.4 395.4C1026.6 393.6 1024.7 392.5 1020.9 392.2C1017.2 392.0 1011.5 393.0 1004.8 393.8C998.1 394.6 988.7 395.8 980.7 397.0C972.6 398.3 963.8 399.7 956.6 401.6C949.3 403.4 943.1 405.8 937.2 408.3C931.3 410.8 925.5 413.4 921.1 416.4C916.8 419.3 913.9 423.9 911.2 426.0C908.4 428.2 906.9 429.0 904.7 429.2C902.6 429.4 900.6 427.3 898.3 427.3C896.0 427.3 892.7 429.7 890.9 429.2C889.1 428.7 886.7 426.6 887.7 424.4C888.7 422.2 893.6 418.8 897.0 416.0C900.4 413.3 904.0 411.2 908.3 408.0C912.6 404.8 919.6 400.2 922.8 397.0C925.9 393.9 927.8 391.3 927.3 389.0C926.7 386.7 920.0 385.2 919.5 383.5Z"/>
</g>
<g fill="#4b2b15" stroke="#26140a" stroke-width="2.4" stroke-linejoin="round">
<path d="M1126.9 378.2C1127.2 375.1 1128.6 372.3 1130.6 370.8C1132.6 369.3 1136.7 369.0 1138.8 369.2C1141.0 369.4 1140.8 372.6 1143.5 372.0C1146.2 371.4 1149.8 367.3 1155.1 365.8C1160.4 364.2 1168.5 362.9 1175.2 362.7C1182.0 362.5 1190.4 364.5 1195.4 364.6C1200.3 364.6 1203.8 364.6 1205.0 363.0C1206.2 361.4 1204.4 358.6 1202.8 354.9C1201.2 351.3 1198.0 345.8 1195.4 341.0C1192.7 336.2 1187.6 328.9 1186.9 326.3C1186.1 323.6 1189.0 324.5 1191.0 325.2C1193.1 325.9 1198.2 331.1 1199.3 330.5C1200.3 329.9 1196.3 322.8 1197.2 321.6C1198.2 320.5 1202.2 321.4 1205.0 323.6C1207.8 325.8 1211.7 330.9 1214.0 334.8C1216.3 338.7 1217.5 344.2 1218.6 347.2C1219.7 350.2 1218.6 351.1 1220.5 352.6C1222.4 354.2 1227.0 354.7 1229.8 356.5C1232.6 358.3 1235.7 361.4 1237.5 363.5C1239.4 365.6 1240.9 367.2 1240.6 369.2C1240.4 371.2 1238.3 373.6 1236.0 375.4C1233.7 377.2 1227.7 378.5 1226.7 380.1C1225.7 381.6 1228.0 383.2 1229.8 384.7C1231.6 386.3 1235.6 387.6 1237.5 389.4C1239.5 391.1 1242.1 393.6 1241.6 394.9C1241.0 396.2 1236.7 396.9 1234.1 397.1C1231.6 397.3 1230.3 395.7 1226.4 396.2C1222.5 396.7 1216.8 399.5 1210.9 400.2C1204.9 400.9 1197.7 399.9 1190.7 400.2C1183.8 400.5 1175.0 399.9 1169.0 401.7C1163.1 403.6 1160.5 408.2 1155.1 411.0C1149.7 413.9 1142.4 416.2 1136.5 418.8C1130.6 421.4 1123.6 425.6 1119.4 426.5C1115.3 427.5 1111.9 426.0 1111.4 424.7C1110.9 423.3 1113.5 421.0 1116.3 418.5C1119.2 416.0 1128.5 410.7 1128.7 409.5C1129.0 408.3 1121.5 411.0 1117.9 411.0C1114.3 411.0 1108.6 410.6 1107.0 409.5C1105.4 408.4 1106.0 405.9 1108.3 404.5C1110.6 403.2 1117.1 402.5 1121.0 401.4C1124.9 400.4 1130.6 400.4 1131.8 398.3C1133.1 396.3 1129.6 392.4 1128.7 389.0C1127.9 385.7 1126.6 381.2 1126.9 378.2Z"/>
</g><g fill="#4b2b15">
<path d="M1126.9 378.2C1127.2 375.1 1128.6 372.3 1130.6 370.8C1132.6 369.3 1136.7 369.0 1138.8 369.2C1141.0 369.4 1140.8 372.6 1143.5 372.0C1146.2 371.4 1149.8 367.3 1155.1 365.8C1160.4 364.2 1168.5 362.9 1175.2 362.7C1182.0 362.5 1190.4 364.5 1195.4 364.6C1200.3 364.6 1203.8 364.6 1205.0 363.0C1206.2 361.4 1204.4 358.6 1202.8 354.9C1201.2 351.3 1198.0 345.8 1195.4 341.0C1192.7 336.2 1187.6 328.9 1186.9 326.3C1186.1 323.6 1189.0 324.5 1191.0 325.2C1193.1 325.9 1198.2 331.1 1199.3 330.5C1200.3 329.9 1196.3 322.8 1197.2 321.6C1198.2 320.5 1202.2 321.4 1205.0 323.6C1207.8 325.8 1211.7 330.9 1214.0 334.8C1216.3 338.7 1217.5 344.2 1218.6 347.2C1219.7 350.2 1218.6 351.1 1220.5 352.6C1222.4 354.2 1227.0 354.7 1229.8 356.5C1232.6 358.3 1235.7 361.4 1237.5 363.5C1239.4 365.6 1240.9 367.2 1240.6 369.2C1240.4 371.2 1238.3 373.6 1236.0 375.4C1233.7 377.2 1227.7 378.5 1226.7 380.1C1225.7 381.6 1228.0 383.2 1229.8 384.7C1231.6 386.3 1235.6 387.6 1237.5 389.4C1239.5 391.1 1242.1 393.6 1241.6 394.9C1241.0 396.2 1236.7 396.9 1234.1 397.1C1231.6 397.3 1230.3 395.7 1226.4 396.2C1222.5 396.7 1216.8 399.5 1210.9 400.2C1204.9 400.9 1197.7 399.9 1190.7 400.2C1183.8 400.5 1175.0 399.9 1169.0 401.7C1163.1 403.6 1160.5 408.2 1155.1 411.0C1149.7 413.9 1142.4 416.2 1136.5 418.8C1130.6 421.4 1123.6 425.6 1119.4 426.5C1115.3 427.5 1111.9 426.0 1111.4 424.7C1110.9 423.3 1113.5 421.0 1116.3 418.5C1119.2 416.0 1128.5 410.7 1128.7 409.5C1129.0 408.3 1121.5 411.0 1117.9 411.0C1114.3 411.0 1108.6 410.6 1107.0 409.5C1105.4 408.4 1106.0 405.9 1108.3 404.5C1110.6 403.2 1117.1 402.5 1121.0 401.4C1124.9 400.4 1130.6 400.4 1131.8 398.3C1133.1 396.3 1129.6 392.4 1128.7 389.0C1127.9 385.7 1126.6 381.2 1126.9 378.2Z"/>
</g>
<rect x="615.8" y="626.3" width="662" height="180" fill="#fdf1aa"/>
<g fill="#1c9943" stroke="#0f6a2d" stroke-width="2.4" stroke-linejoin="round">
<path d="M598.3 822.5 L598.3 822.5 Q598.3 798.5 622.3 798.5 L1272.8 798.5 Q1296.8 798.5 1296.8 822.5 L1296.8 870.0 Q1296.8 870.0 1296.8 870.0 L598.3 870.0 Q598.3 870.0 598.3 870.0 Z"/>
</g><g fill="#1c9943">
<path d="M598.3 822.5 L598.3 822.5 Q598.3 798.5 622.3 798.5 L1272.8 798.5 Q1296.8 798.5 1296.8 822.5 L1296.8 870.0 Q1296.8 870.0 1296.8 870.0 L598.3 870.0 Q598.3 870.0 598.3 870.0 Z"/>
</g>
<g fill="#137a49" stroke="#0a472a" stroke-width="2.4" stroke-linejoin="round">
<path d="M635.9 771.3C634.7 769.6 643.5 761.6 646.8 759.7C650.2 757.8 659.1 755.2 664.4 755.1C669.7 755.1 689.8 760.5 692.3 759.3C694.8 758.0 684.4 745.8 685.5 744.4C686.6 742.9 698.2 745.9 701.6 746.9C705.0 747.9 711.5 754.2 714.4 753.1C717.3 752.0 724.3 738.3 726.4 737.6C728.5 736.8 730.1 744.1 732.2 746.5C734.3 748.8 740.9 757.4 744.6 757.6C748.3 757.8 759.1 748.8 763.6 747.9C768.1 747.0 782.3 748.2 783.2 750.0C784.2 751.8 769.6 761.2 771.9 763.4C774.2 765.6 799.6 769.7 802.9 769.2C806.1 768.7 798.1 760.5 799.8 758.9C801.5 757.2 813.2 755.0 817.3 755.1C821.4 755.3 832.1 761.9 834.9 760.3C837.7 758.7 838.6 743.0 841.1 741.7C843.6 740.4 853.5 746.5 856.6 748.9C859.7 751.3 864.8 762.6 868.0 762.4C871.1 762.1 880.5 747.3 883.5 746.9C886.5 746.4 890.4 755.6 893.8 758.2C897.2 760.9 907.0 768.9 912.4 769.6C917.8 770.3 935.8 762.7 940.5 763.8C945.2 764.9 952.9 776.9 952.9 779.3C952.9 781.7 940.8 782.6 940.5 784.5C940.2 786.3 950.3 792.9 950.0 795.0C949.7 797.1 940.4 800.9 938.0 802.7C935.7 804.5 931.2 807.0 930.0 810.5C928.7 814.0 931.1 830.8 927.5 832.6C923.9 834.5 904.1 825.3 899.0 826.4C893.8 827.5 887.9 841.3 883.5 841.9C879.0 842.5 863.6 834.5 860.7 831.6C857.8 828.7 861.8 819.3 858.7 817.1C855.5 815.0 837.0 814.7 833.9 813.0C830.7 811.3 835.4 802.9 831.8 802.7C828.2 802.4 806.6 810.9 802.9 810.9C799.1 810.9 802.9 804.0 799.8 802.7C796.6 801.3 779.3 797.9 776.0 799.6C772.7 801.3 776.2 816.0 771.9 817.1C767.5 818.3 743.4 808.6 738.8 809.3C734.2 810.0 735.5 820.0 732.6 823.3C729.7 826.7 716.7 837.7 714.0 838.2C711.3 838.7 713.0 830.6 709.9 827.5C706.7 824.3 692.0 811.3 687.1 811.3C682.3 811.3 671.4 826.8 668.5 827.5C665.6 828.1 663.3 820.2 662.3 817.1C661.3 814.0 663.2 803.2 659.9 801.0C656.5 798.8 634.6 800.3 633.4 798.1C632.2 795.9 647.2 784.8 649.9 782.0C652.7 779.2 658.8 775.4 657.2 774.1C655.5 772.9 637.1 772.9 635.9 771.3Z"/>
</g><g fill="#137a49">
<path d="M635.9 771.3C634.7 769.6 643.5 761.6 646.8 759.7C650.2 757.8 659.1 755.2 664.4 755.1C669.7 755.1 689.8 760.5 692.3 759.3C694.8 758.0 684.4 745.8 685.5 744.4C686.6 742.9 698.2 745.9 701.6 746.9C705.0 747.9 711.5 754.2 714.4 753.1C717.3 752.0 724.3 738.3 726.4 737.6C728.5 736.8 730.1 744.1 732.2 746.5C734.3 748.8 740.9 757.4 744.6 757.6C748.3 757.8 759.1 748.8 763.6 747.9C768.1 747.0 782.3 748.2 783.2 750.0C784.2 751.8 769.6 761.2 771.9 763.4C774.2 765.6 799.6 769.7 802.9 769.2C806.1 768.7 798.1 760.5 799.8 758.9C801.5 757.2 813.2 755.0 817.3 755.1C821.4 755.3 832.1 761.9 834.9 760.3C837.7 758.7 838.6 743.0 841.1 741.7C843.6 740.4 853.5 746.5 856.6 748.9C859.7 751.3 864.8 762.6 868.0 762.4C871.1 762.1 880.5 747.3 883.5 746.9C886.5 746.4 890.4 755.6 893.8 758.2C897.2 760.9 907.0 768.9 912.4 769.6C917.8 770.3 935.8 762.7 940.5 763.8C945.2 764.9 952.9 776.9 952.9 779.3C952.9 781.7 940.8 782.6 940.5 784.5C940.2 786.3 950.3 792.9 950.0 795.0C949.7 797.1 940.4 800.9 938.0 802.7C935.7 804.5 931.2 807.0 930.0 810.5C928.7 814.0 931.1 830.8 927.5 832.6C923.9 834.5 904.1 825.3 899.0 826.4C893.8 827.5 887.9 841.3 883.5 841.9C879.0 842.5 863.6 834.5 860.7 831.6C857.8 828.7 861.8 819.3 858.7 817.1C855.5 815.0 837.0 814.7 833.9 813.0C830.7 811.3 835.4 802.9 831.8 802.7C828.2 802.4 806.6 810.9 802.9 810.9C799.1 810.9 802.9 804.0 799.8 802.7C796.6 801.3 779.3 797.9 776.0 799.6C772.7 801.3 776.2 816.0 771.9 817.1C767.5 818.3 743.4 808.6 738.8 809.3C734.2 810.0 735.5 820.0 732.6 823.3C729.7 826.7 716.7 837.7 714.0 838.2C711.3 838.7 713.0 830.6 709.9 827.5C706.7 824.3 692.0 811.3 687.1 811.3C682.3 811.3 671.4 826.8 668.5 827.5C665.6 828.1 663.3 820.2 662.3 817.1C661.3 814.0 663.2 803.2 659.9 801.0C656.5 798.8 634.6 800.3 633.4 798.1C632.2 795.9 647.2 784.8 649.9 782.0C652.7 779.2 658.8 775.4 657.2 774.1C655.5 772.9 637.1 772.9 635.9 771.3Z"/>
</g>
<g fill="#4a2c15" stroke="#261306" stroke-width="2.4" stroke-linejoin="round">
<path d="M849.1 728.0C849.2 725.8 850.6 722.8 852.6 719.9C854.5 717.0 859.4 713.2 862.3 708.8C865.2 704.4 870.0 695.7 872.0 690.5C874.0 685.4 874.2 677.8 875.5 674.3C876.7 670.8 878.6 667.8 880.5 667.2C882.5 666.6 886.2 668.9 888.6 670.3C891.1 671.6 891.9 676.6 896.7 676.3C901.6 676.0 912.9 670.8 921.1 668.2C929.3 665.7 942.9 659.7 951.5 659.1C960.0 658.5 970.2 663.3 977.8 664.2C985.4 665.1 993.9 665.0 1002.1 665.2C1010.3 665.4 1024.0 664.6 1032.5 665.2C1041.0 665.8 1051.9 666.7 1058.9 669.3C1065.9 671.8 1074.3 677.7 1079.1 682.4C1084.0 687.1 1089.0 694.0 1091.3 700.7C1093.6 707.3 1094.3 717.9 1094.3 727.0C1094.3 736.1 1092.2 753.3 1091.3 761.5C1090.4 769.7 1089.3 776.6 1088.2 781.7C1087.2 786.9 1085.1 791.7 1084.2 795.9C1083.3 800.2 1083.8 807.7 1082.2 810.1C1080.5 812.5 1077.5 811.8 1073.0 812.1C1068.6 812.4 1056.4 812.7 1052.8 812.1C1049.1 811.5 1048.0 809.9 1048.7 808.1C1049.5 806.2 1056.6 804.2 1057.8 800.0C1059.1 795.7 1057.3 783.1 1056.8 779.7C1056.4 776.3 1056.0 776.0 1054.8 777.3C1053.6 778.5 1050.2 784.2 1048.7 787.8C1047.2 791.4 1045.9 798.1 1044.7 801.0C1043.5 803.9 1044.0 806.0 1040.6 807.1C1037.3 808.1 1026.6 808.2 1022.4 808.1C1018.1 807.9 1013.6 807.0 1012.3 806.0C1010.9 805.1 1011.1 803.5 1013.3 802.0C1015.4 800.5 1024.2 799.9 1026.4 795.9C1028.7 792.0 1028.0 779.9 1028.5 775.6C1028.9 771.4 1031.9 768.8 1029.5 767.5C1027.0 766.3 1018.2 768.1 1012.3 767.5C1006.3 766.9 993.9 763.5 990.0 763.5C986.0 763.5 987.1 764.8 985.9 767.5C984.7 770.3 983.1 776.9 981.9 781.7C980.6 786.6 979.0 795.7 977.8 800.0C976.6 804.2 976.2 808.3 973.7 810.1C971.3 811.9 965.8 812.0 961.6 812.1C957.3 812.3 948.3 812.0 945.4 811.1C942.5 810.2 941.1 807.6 942.3 806.0C943.6 804.5 951.5 803.4 953.5 801.0C955.5 798.5 955.7 793.6 955.5 789.8C955.4 786.0 954.3 779.3 952.5 775.6C950.6 772.0 947.2 766.1 943.4 765.5C939.6 764.9 932.3 769.5 927.1 771.6C922.0 773.7 912.9 777.9 908.9 779.7C904.9 781.5 902.2 780.7 900.8 783.7C899.4 786.8 901.0 796.5 899.8 800.0C898.6 803.5 895.1 806.3 892.7 807.1C890.3 807.8 885.4 807.3 883.6 805.0C881.7 802.7 880.1 796.9 880.5 791.9C881.0 786.8 884.5 776.5 886.6 771.6C888.7 766.7 892.0 762.8 894.7 759.4C897.5 756.1 902.6 752.6 904.8 749.3C907.1 746.0 912.0 739.3 909.9 737.1C907.8 735.0 896.0 735.1 890.7 735.1C885.3 735.1 878.4 736.4 874.5 737.1C870.5 737.9 866.6 740.0 864.3 740.2C862.0 740.3 861.1 739.0 859.3 738.2C857.4 737.3 853.7 736.2 852.2 734.7C850.6 733.2 849.1 730.2 849.1 728.0Z"/>
</g><g fill="#4a2c15">
<path d="M849.1 728.0C849.2 725.8 850.6 722.8 852.6 719.9C854.5 717.0 859.4 713.2 862.3 708.8C865.2 704.4 870.0 695.7 872.0 690.5C874.0 685.4 874.2 677.8 875.5 674.3C876.7 670.8 878.6 667.8 880.5 667.2C882.5 666.6 886.2 668.9 888.6 670.3C891.1 671.6 891.9 676.6 896.7 676.3C901.6 676.0 912.9 670.8 921.1 668.2C929.3 665.7 942.9 659.7 951.5 659.1C960.0 658.5 970.2 663.3 977.8 664.2C985.4 665.1 993.9 665.0 1002.1 665.2C1010.3 665.4 1024.0 664.6 1032.5 665.2C1041.0 665.8 1051.9 666.7 1058.9 669.3C1065.9 671.8 1074.3 677.7 1079.1 682.4C1084.0 687.1 1089.0 694.0 1091.3 700.7C1093.6 707.3 1094.3 717.9 1094.3 727.0C1094.3 736.1 1092.2 753.3 1091.3 761.5C1090.4 769.7 1089.3 776.6 1088.2 781.7C1087.2 786.9 1085.1 791.7 1084.2 795.9C1083.3 800.2 1083.8 807.7 1082.2 810.1C1080.5 812.5 1077.5 811.8 1073.0 812.1C1068.6 812.4 1056.4 812.7 1052.8 812.1C1049.1 811.5 1048.0 809.9 1048.7 808.1C1049.5 806.2 1056.6 804.2 1057.8 800.0C1059.1 795.7 1057.3 783.1 1056.8 779.7C1056.4 776.3 1056.0 776.0 1054.8 777.3C1053.6 778.5 1050.2 784.2 1048.7 787.8C1047.2 791.4 1045.9 798.1 1044.7 801.0C1043.5 803.9 1044.0 806.0 1040.6 807.1C1037.3 808.1 1026.6 808.2 1022.4 808.1C1018.1 807.9 1013.6 807.0 1012.3 806.0C1010.9 805.1 1011.1 803.5 1013.3 802.0C1015.4 800.5 1024.2 799.9 1026.4 795.9C1028.7 792.0 1028.0 779.9 1028.5 775.6C1028.9 771.4 1031.9 768.8 1029.5 767.5C1027.0 766.3 1018.2 768.1 1012.3 767.5C1006.3 766.9 993.9 763.5 990.0 763.5C986.0 763.5 987.1 764.8 985.9 767.5C984.7 770.3 983.1 776.9 981.9 781.7C980.6 786.6 979.0 795.7 977.8 800.0C976.6 804.2 976.2 808.3 973.7 810.1C971.3 811.9 965.8 812.0 961.6 812.1C957.3 812.3 948.3 812.0 945.4 811.1C942.5 810.2 941.1 807.6 942.3 806.0C943.6 804.5 951.5 803.4 953.5 801.0C955.5 798.5 955.7 793.6 955.5 789.8C955.4 786.0 954.3 779.3 952.5 775.6C950.6 772.0 947.2 766.1 943.4 765.5C939.6 764.9 932.3 769.5 927.1 771.6C922.0 773.7 912.9 777.9 908.9 779.7C904.9 781.5 902.2 780.7 900.8 783.7C899.4 786.8 901.0 796.5 899.8 800.0C898.6 803.5 895.1 806.3 892.7 807.1C890.3 807.8 885.4 807.3 883.6 805.0C881.7 802.7 880.1 796.9 880.5 791.9C881.0 786.8 884.5 776.5 886.6 771.6C888.7 766.7 892.0 762.8 894.7 759.4C897.5 756.1 902.6 752.6 904.8 749.3C907.1 746.0 912.0 739.3 909.9 737.1C907.8 735.0 896.0 735.1 890.7 735.1C885.3 735.1 878.4 736.4 874.5 737.1C870.5 737.9 866.6 740.0 864.3 740.2C862.0 740.3 861.1 739.0 859.3 738.2C857.4 737.3 853.7 736.2 852.2 734.7C850.6 733.2 849.1 730.2 849.1 728.0Z"/>
</g>
<g fill="#8d5219" stroke="#4a280a" stroke-width="2.4" stroke-linejoin="round">
<path d="M1098.5 756.2C1098.4 754.5 1099.9 752.7 1101.6 750.0C1103.4 747.3 1108.0 741.6 1110.1 738.4C1112.2 735.1 1114.4 731.8 1115.6 728.3C1116.7 724.8 1117.0 717.6 1117.9 715.1C1118.8 712.7 1120.4 712.0 1121.8 712.0C1123.2 712.0 1125.4 714.1 1127.2 715.1C1128.9 716.2 1129.7 719.4 1133.4 719.0C1137.1 718.7 1146.4 714.6 1152.0 712.8C1157.5 711.1 1165.0 707.6 1170.6 707.4C1176.1 707.2 1183.1 710.8 1189.2 711.3C1195.2 711.7 1203.6 710.4 1210.8 710.5C1218.0 710.6 1230.7 710.9 1237.2 712.0C1243.7 713.2 1250.3 715.7 1254.2 718.2C1258.2 720.8 1261.2 724.7 1263.5 729.1C1265.8 733.5 1269.0 741.2 1269.7 747.7C1270.4 754.2 1268.9 766.0 1268.2 772.5C1267.5 779.0 1266.0 786.4 1265.1 791.1C1264.1 795.7 1262.7 800.2 1262.0 803.5C1261.3 806.7 1262.3 811.1 1260.4 812.7C1258.6 814.4 1252.8 814.2 1249.6 814.3C1246.3 814.4 1240.6 814.2 1238.7 813.5C1236.9 812.8 1236.5 811.2 1237.2 809.6C1237.9 808.1 1242.3 806.2 1243.4 803.5C1244.4 800.7 1244.3 793.3 1244.2 791.1C1244.0 788.8 1243.3 788.3 1242.6 788.7C1241.9 789.2 1240.6 791.9 1239.5 794.2C1238.5 796.4 1237.1 801.1 1235.6 803.5C1234.1 805.8 1232.7 808.6 1229.4 809.6C1226.2 810.7 1216.5 810.8 1213.9 810.4C1211.4 810.1 1211.5 808.6 1212.4 807.3C1213.3 806.0 1218.5 804.6 1220.1 801.9C1221.8 799.2 1222.7 792.3 1223.2 789.5C1223.8 786.7 1226.3 784.4 1224.0 783.3C1221.7 782.3 1212.0 783.1 1207.7 782.5C1203.4 782.0 1197.9 778.6 1195.4 779.4C1192.8 780.2 1191.6 784.8 1190.7 788.0C1189.8 791.1 1189.6 796.6 1189.2 800.4C1188.7 804.1 1189.5 810.5 1187.6 812.7C1185.7 815.0 1180.2 815.0 1176.8 815.1C1173.3 815.2 1166.5 814.3 1164.4 813.5C1162.3 812.7 1162.1 810.7 1162.8 809.6C1163.5 808.6 1167.9 808.6 1169.0 806.5C1170.2 804.5 1170.8 798.7 1170.6 795.7C1170.3 792.7 1168.9 788.8 1167.5 786.4C1166.1 784.0 1164.1 779.4 1161.3 779.4C1158.5 779.4 1152.6 784.7 1148.9 786.4C1145.2 788.2 1138.8 789.4 1136.5 791.1C1134.2 792.7 1133.7 794.9 1133.4 797.3C1133.0 799.6 1134.7 804.6 1134.2 806.5C1133.6 808.5 1131.2 810.0 1129.5 810.4C1127.8 810.9 1123.8 811.2 1122.5 809.6C1121.3 808.1 1120.8 803.6 1121.0 800.4C1121.2 797.1 1122.7 791.4 1124.1 788.0C1125.5 784.5 1128.0 779.9 1130.3 777.1C1132.6 774.3 1137.8 771.7 1139.6 769.4C1141.3 767.0 1143.5 762.9 1141.9 761.6C1140.3 760.3 1132.6 760.6 1128.7 760.8C1124.9 761.1 1119.4 762.7 1116.3 763.2C1113.3 763.6 1110.7 764.2 1108.6 763.9C1106.5 763.7 1103.9 762.8 1102.4 761.6C1100.9 760.5 1098.6 757.9 1098.5 756.2Z"/>
</g><g fill="#8d5219">
<path d="M1098.5 756.2C1098.4 754.5 1099.9 752.7 1101.6 750.0C1103.4 747.3 1108.0 741.6 1110.1 738.4C1112.2 735.1 1114.4 731.8 1115.6 728.3C1116.7 724.8 1117.0 717.6 1117.9 715.1C1118.8 712.7 1120.4 712.0 1121.8 712.0C1123.2 712.0 1125.4 714.1 1127.2 715.1C1128.9 716.2 1129.7 719.4 1133.4 719.0C1137.1 718.7 1146.4 714.6 1152.0 712.8C1157.5 711.1 1165.0 707.6 1170.6 707.4C1176.1 707.2 1183.1 710.8 1189.2 711.3C1195.2 711.7 1203.6 710.4 1210.8 710.5C1218.0 710.6 1230.7 710.9 1237.2 712.0C1243.7 713.2 1250.3 715.7 1254.2 718.2C1258.2 720.8 1261.2 724.7 1263.5 729.1C1265.8 733.5 1269.0 741.2 1269.7 747.7C1270.4 754.2 1268.9 766.0 1268.2 772.5C1267.5 779.0 1266.0 786.4 1265.1 791.1C1264.1 795.7 1262.7 800.2 1262.0 803.5C1261.3 806.7 1262.3 811.1 1260.4 812.7C1258.6 814.4 1252.8 814.2 1249.6 814.3C1246.3 814.4 1240.6 814.2 1238.7 813.5C1236.9 812.8 1236.5 811.2 1237.2 809.6C1237.9 808.1 1242.3 806.2 1243.4 803.5C1244.4 800.7 1244.3 793.3 1244.2 791.1C1244.0 788.8 1243.3 788.3 1242.6 788.7C1241.9 789.2 1240.6 791.9 1239.5 794.2C1238.5 796.4 1237.1 801.1 1235.6 803.5C1234.1 805.8 1232.7 808.6 1229.4 809.6C1226.2 810.7 1216.5 810.8 1213.9 810.4C1211.4 810.1 1211.5 808.6 1212.4 807.3C1213.3 806.0 1218.5 804.6 1220.1 801.9C1221.8 799.2 1222.7 792.3 1223.2 789.5C1223.8 786.7 1226.3 784.4 1224.0 783.3C1221.7 782.3 1212.0 783.1 1207.7 782.5C1203.4 782.0 1197.9 778.6 1195.4 779.4C1192.8 780.2 1191.6 784.8 1190.7 788.0C1189.8 791.1 1189.6 796.6 1189.2 800.4C1188.7 804.1 1189.5 810.5 1187.6 812.7C1185.7 815.0 1180.2 815.0 1176.8 815.1C1173.3 815.2 1166.5 814.3 1164.4 813.5C1162.3 812.7 1162.1 810.7 1162.8 809.6C1163.5 808.6 1167.9 808.6 1169.0 806.5C1170.2 804.5 1170.8 798.7 1170.6 795.7C1170.3 792.7 1168.9 788.8 1167.5 786.4C1166.1 784.0 1164.1 779.4 1161.3 779.4C1158.5 779.4 1152.6 784.7 1148.9 786.4C1145.2 788.2 1138.8 789.4 1136.5 791.1C1134.2 792.7 1133.7 794.9 1133.4 797.3C1133.0 799.6 1134.7 804.6 1134.2 806.5C1133.6 808.5 1131.2 810.0 1129.5 810.4C1127.8 810.9 1123.8 811.2 1122.5 809.6C1121.3 808.1 1120.8 803.6 1121.0 800.4C1121.2 797.1 1122.7 791.4 1124.1 788.0C1125.5 784.5 1128.0 779.9 1130.3 777.1C1132.6 774.3 1137.8 771.7 1139.6 769.4C1141.3 767.0 1143.5 762.9 1141.9 761.6C1140.3 760.3 1132.6 760.6 1128.7 760.8C1124.9 761.1 1119.4 762.7 1116.3 763.2C1113.3 763.6 1110.7 764.2 1108.6 763.9C1106.5 763.7 1103.9 762.8 1102.4 761.6C1100.9 760.5 1098.6 757.9 1098.5 756.2Z"/>
</g>
<path d="M947 680.5V741.2M917 710.2H976.2" stroke="#a58e76" stroke-width="1.3"/>
<path d="M615.8 626.3H1277.6V794.4H615.8Z" fill="none" stroke="#9e9e9e" stroke-width="1.6"/>
<path d="M615.8 794.6H1277.6" stroke="#a9a9a9" stroke-width="2.2"/>
<rect x="609.4" y="620.0" width="12.5" height="12.5" fill="#fff" stroke="#9a9a9a" stroke-width="1.3"/>
<rect x="1271.3" y="620.0" width="12.5" height="12.5" fill="#fff" stroke="#9a9a9a" stroke-width="1.3"/>
<rect x="609.4" y="787.4" width="12.5" height="12.5" fill="#fff" stroke="#9a9a9a" stroke-width="1.3"/>
<rect x="1271.3" y="787.4" width="12.5" height="12.5" fill="#fff" stroke="#9a9a9a" stroke-width="1.3"/>
<path d="M1428 841 C1440 815 1452 795 1463 790.5 Q1469 789 1471 794 Q1479 810 1482 841 Z" fill="#758270" stroke="#4a5346" stroke-width="1"/>
</svg>
<div class="abs" style="left:881px;top:582.8px;width:132px;height:24px;background:#222;border-radius:3px"></div>
<div class="abs" style="left:895px;top:587.8px;font-size:14.6px;line-height:1;color:#fff;white-space:nowrap;font-weight:bold;letter-spacing:-0.6px">4.47&nbsp; in x 1.14&nbsp; in</div>
<div class="abs" style="left:195.5px;top:172px;width:235px;height:618.5px;background:#fff;border-radius:0 0 5px 5px;box-shadow:0 10px 24px 6px rgba(0,0,0,0.18)"></div>
<div class="abs" style="left:175px;top:164.5px;width:275px;height:8.5px;background:#fff"></div>
<!-- Cut -->
<svg class="abs" style="left:213px;top:189px" width="30" height="26" viewBox="213 189 30 26"><circle cx="235" cy="195.9" r="3.6" fill="none" stroke="#111" stroke-width="1.7"/><circle cx="235" cy="207.8" r="3.6" fill="none" stroke="#111" stroke-width="1.7"/><path d="M216.5 196.3 Q218 195.2 221 196.2 L232.3 205.2 L230.8 206.4 L218.5 198.8 Q216 197.8 216.5 196.3 Z" fill="#fff" stroke="#111" stroke-width="1.6" stroke-linejoin="round"/><path d="M216.5 207.6 Q218 208.7 221 207.7 L232.3 198.6 L230.8 197.4 L218.5 205.1 Q216 206.1 216.5 207.6 Z" fill="#fff" stroke="#111" stroke-width="1.6" stroke-linejoin="round"/></svg>
<div class="menu-item" style="top:194.5px;line-height:1;font-weight:bold;color:#111">Cut</div>
<div class="abs" style="left:204.5px;top:223px;width:216px;height:36px;background:#eaf7f1;border-radius:8px"></div>
<svg class="abs" style="left:218px;top:233px" width="22" height="17" viewBox="0 0 22 17"><path d="M2 9 L7 14 L18.5 2.5" fill="none" stroke="#1d7c5b" stroke-width="2.1"/></svg>
<div class="menu-item" style="top:234.5px;line-height:1;font-weight:bold;color:#1b7a58">Basic</div>
<div class="menu-item" style="top:274.5px;line-height:1;font-size:16.7px">Wavy</div>
<div class="menu-item" style="top:314px;line-height:1;font-size:16.7px">Perforate</div>
<div class="abs" style="left:195.5px;top:359px;width:235px;height:1.5px;background:#e9e9e9"></div>
<!-- Draw -->
<svg class="abs" style="left:215px;top:385px" width="27" height="25" viewBox="0 0 27 25"><path d="M3 21.5 L4.5 16 L17 3.5 Q18.5 2 20 3.5 L21.5 5 Q23 6.5 21.5 8 L9 20.5 Z" fill="none" stroke="#111" stroke-width="1.7" stroke-linejoin="round"/><path d="M2.5 22.5 H25" stroke="#111" stroke-width="1.7"/></svg>
<div class="menu-item" style="top:391px;line-height:1;font-weight:bold;color:#111">Draw</div>
<div class="menu-item" style="top:431.5px;line-height:1;font-size:16.7px">Pen</div>
<div class="menu-item" style="top:471px;line-height:1;font-size:16.7px">Foil</div>
<svg class="abs" style="left:403.5px;top:476.5px" width="6" height="8" viewBox="0 0 6 8"><path d="M0.5 0.5 L5.5 4 L0.5 7.5 Z" fill="#111"/></svg>
<div class="menu-item" style="top:510.5px;line-height:1;font-size:16.7px">Score</div>
<div class="menu-item" style="top:551px;line-height:1;font-size:16.7px">Deboss</div>
<div class="menu-item" style="top:590.5px;line-height:1;font-size:16.7px">Engrave</div>
<div class="abs" style="left:195.5px;top:635px;width:235px;height:1.5px;background:#e9e9e9"></div>
<!-- Print then cut -->
<svg class="abs" style="left:252px;top:661px" width="27" height="26" viewBox="0 0 27 26"><path d="M7 11 V2 H17.5 L21 5.5 V11" fill="none" stroke="#111" stroke-width="1.7" stroke-linejoin="round"/><path d="M17 2 V6 H21" fill="none" stroke="#111" stroke-width="1.5"/><path d="M7 20.5 H4 Q2.5 20.5 2.5 19 V12.5 Q2.5 11 4 11 H22 Q24.5 11 24.5 12.5 V19 Q24.5 20.5 23 20.5 H20" fill="none" stroke="#111" stroke-width="1.7" stroke-linejoin="round"/><rect x="7" y="16" width="13" height="7.5" fill="none" stroke="#111" stroke-width="1.7"/></svg>
<div class="abs" style="left:289.5px;top:667.5px;font-size:16.9px;line-height:1;color:#2b2b2b;white-space:nowrap">Print Then Cut</div>
<div class="abs" style="left:195.5px;top:712px;width:235px;height:1.5px;background:#e9e9e9"></div>
<!-- Guide -->
<div class="abs" style="left:204.5px;top:731.5px;width:216px;height:38px;background:#f4f4f4;border-radius:8px"></div>
<svg class="abs" style="left:253px;top:739px" width="25" height="24" viewBox="0 0 25 24"><path d="M6.3 1.5 V22 M18.8 1.5 V22 M1.8 5.4 H23.3 M1.8 17.6 H23.3" fill="none" stroke="#111" stroke-width="1.8"/></svg>
<div class="abs" style="left:289.5px;top:743.5px;font-size:16.9px;line-height:1;color:#2b2b2b;white-space:nowrap">Guide</div>
<!-- hand cursor -->
<svg class="abs" style="left:300px;top:744px" width="50" height="58" viewBox="300 744 50 58"><path d="M320.5 752 Q320.5 748.6 323.2 748.6 Q326 748.6 326 752 L326 765.5 Q326.5 760.8 330 760.8 Q333.4 760.8 333.6 764.5 L333.6 766.5 Q334.2 762.6 337 762.6 Q339.8 762.6 339.9 766 L339.9 768.5 Q340.4 765.4 342.3 765.4 Q344.6 765.4 344.6 769 L344.6 784 Q344.6 792.5 339.5 796.5 L327.5 797.5 Q322 796 318 790.5 L309 779.5 Q307.3 776.3 309.5 774.8 Q312 773.5 315 776.5 L320.5 781.5 Z" fill="#000" stroke="#fff" stroke-width="2" stroke-linejoin="round"/><path d="M326 766 V776 M333.6 767 V776 M339.9 769 V777" stroke="#fff" stroke-width="1"/></svg>
<svg class="abs" style="left:0;top:700px" width="170" height="139" viewBox="0 700 170 139">
<ellipse cx="80.2" cy="774.8" rx="66.5" ry="51.5" fill="#f3e9e6" opacity="0.7"/>
<ellipse cx="80.2" cy="774.8" rx="65.6" ry="50.8" fill="#c83b1f"/>
<text x="29" y="773" style="font-family:'Liberation Serif'" font-style="italic" font-size="37" fill="#fff" letter-spacing="-1">Craft</text>
<text x="106.5" y="766" style="font-family:'Liberation Serif'" font-weight="bold" font-size="8.6" fill="#fff">WITH</text>
<path d="M106 772 Q118 768 128 770 Q134 771 136 767" fill="none" stroke="#fff" stroke-width="1.2"/>
<text x="38" y="808" style="font-family:'Liberation Serif'" font-style="italic" font-size="36" fill="#fff" letter-spacing="-0.5">Sarah</text>
<path d="M89 780 Q100 776 112 778 Q122 780 126 776" fill="none" stroke="#fff" stroke-width="1.2"/>
</svg>
</body></html>
